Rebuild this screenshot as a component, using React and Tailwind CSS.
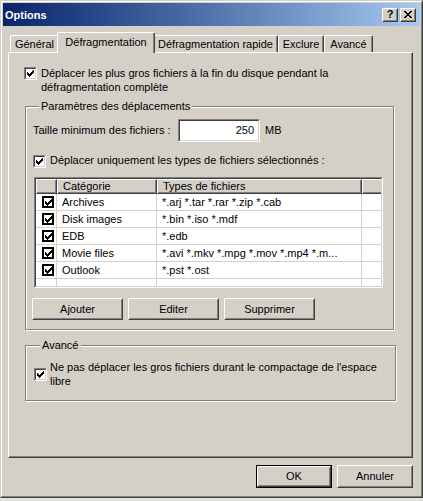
import React from "react";

function CheckMark() {
  return (
    <svg width="7" height="7" viewBox="0 0 7 7" shapeRendering="crispEdges" className="block">
      <path
        fill="#000"
        d="M6 0h1v1h-1z M5 1h2v1h-2z M0 2h1v1h-1z M4 2h3v1h-3z M0 3h2v1h-2z M3 3h3v1h-3z M0 4h5v1h-5z M1 5h3v1h-3z M2 6h1v1h-1z"
      />
    </svg>
  );
}

function Check({ className = "" }) {
  return (
    <div className={"w-[13px] h-[13px] shrink-0 border border-t-[#808080] border-l-[#808080] border-r-white border-b-white " + className}>
      <div className="w-full h-full bg-white border border-t-[#404040] border-l-[#404040] border-r-[#D4D0C8] border-b-[#D4D0C8] flex items-center justify-center">
        <CheckMark />
      </div>
    </div>
  );
}

function FlatCheck() {
  return (
    <div className="w-[12px] h-[12px] shrink-0 border-2 border-black bg-white flex items-center justify-center">
      <CheckMark />
    </div>
  );
}

function Button({ children, className = "" }) {
  return (
    <div className={"border border-t-white border-l-white border-r-[#404040] border-b-[#404040] bg-[#D4D0C8] " + className}>
      <div className="w-full h-full border border-t-[#D4D0C8] border-l-[#D4D0C8] border-r-[#808080] border-b-[#808080] flex items-center justify-center">
        {children}
      </div>
    </div>
  );
}

function XGlyph() {
  return (
    <svg width="8" height="7" viewBox="0 0 8 7" shapeRendering="crispEdges" className="block">
      <path
        fill="#000"
        d="M0 0h2v1h-2z M6 0h2v1h-2z M1 1h2v1h-2z M5 1h2v1h-2z M2 2h4v1h-4z M3 3h2v1h-2z M2 4h4v1h-4z M1 5h2v1h-2z M5 5h2v1h-2z M0 6h2v1h-2z M6 6h2v1h-2z"
      />
    </svg>
  );
}

function TitleBar() {
  return (
    <div className="h-[23px] shrink-0 bg-gradient-to-r from-[#0A246A] to-[#A6CAF0] flex items-center justify-between pl-[2px] pr-[4px]">
      <span className="text-white font-bold text-[11px] leading-[14px]">Options</span>
      <div className="flex items-center gap-[2px]">
        <Button className="w-[16px] h-[14px]">
          <span className="font-bold text-[11px] leading-[10px] -mt-[1px]">?</span>
        </Button>
        <Button className="w-[16px] h-[14px]">
          <XGlyph />
        </Button>
      </div>
    </div>
  );
}

function Tab({ label, w }) {
  return (
    <div
      className={
        "h-[17px] shrink-0 bg-[#D4D0C8] border-t border-l border-r border-t-white border-l-white border-r-[#404040] rounded-tl-[2px] rounded-tr-[2px] shadow-[inset_-1px_0_0_#808080] flex items-center justify-center " +
        w
      }
    >
      {label}
    </div>
  );
}

function Tabs() {
  return (
    <div className="h-[20px] shrink-0 flex items-end pl-[2px]">
      <Tab label="Général" w="w-[49px]" />
      <div className="relative z-10 -mx-[2px] -mb-[1px] w-[98px] h-[21px] shrink-0 bg-[#D4D0C8] border-t border-l border-r border-t-white border-l-white border-r-[#404040] rounded-tl-[2px] rounded-tr-[2px] shadow-[inset_-1px_0_0_#808080] flex items-center justify-center pb-[2px]">
        Défragmentation
      </div>
      <Tab label="Défragmentation rapide" w="w-[125px]" />
      <Tab label="Exclure" w="w-[46px]" />
      <Tab label="Avancé" w="w-[49px]" />
    </div>
  );
}

function Group({ label, className = "", children }) {
  return (
    <div className={"border border-[#808080] shadow-[inset_1px_1px_0_#ffffff,1px_1px_0_#ffffff] flex flex-col " + className}>
      <div className="-mt-[8px] ml-[7px] px-[2px] w-fit bg-[#D4D0C8] leading-[14px]">{label}</div>
      {children}
    </div>
  );
}

const rows = [
  ["Archives", "*.arj *.tar *.rar *.zip *.cab"],
  ["Disk images", "*.bin *.iso *.mdf"],
  ["EDB", "*.edb"],
  ["Movie files", "*.avi *.mkv *.mpg *.mov *.mp4 *.m..."],
  ["Outlook", "*.pst *.ost"],
];

function HeaderCell({ children, w }) {
  return (
    <div className={"h-full shrink-0 border-t border-l border-t-white border-l-white border-r border-b border-r-[#404040] border-b-[#404040] shadow-[inset_-1px_-1px_0_#808080] flex items-center pl-[5px] " + w}>
      {children}
    </div>
  );
}

function List() {
  return (
    <div className="ml-[2px] mt-[9px] w-[349px] h-[111px] border border-t-[#808080] border-l-[#808080] border-r-white border-b-white">
      <div className="w-full h-full bg-white border border-t-[#404040] border-l-[#404040] border-r-[#D4D0C8] border-b-[#D4D0C8] overflow-hidden flex flex-col">
        <div className="h-[15px] shrink-0 flex bg-[#D4D0C8]">
          <HeaderCell w="w-[21px]" />
          <HeaderCell w="w-[100px]">Catégorie</HeaderCell>
          <HeaderCell w="w-[205px]">Types de fichiers</HeaderCell>
          <div className="h-full flex-1 border-t border-l border-t-white border-l-white border-b border-b-[#404040] shadow-[inset_0_-1px_0_#808080]" />
        </div>
        {rows.map(([cat, types]) => (
          <div key={cat} className="h-[17px] shrink-0 flex border-b border-[#D4D0C8]">
            <div className="w-[21px] shrink-0 border-r border-[#D4D0C8] flex items-center pl-[6px]">
              <FlatCheck />
            </div>
            <div className="w-[100px] shrink-0 border-r border-[#D4D0C8] flex items-center pl-[5px] whitespace-nowrap">{cat}</div>
            <div className="w-[205px] shrink-0 border-r border-[#D4D0C8] flex items-center pl-[5px] whitespace-nowrap overflow-hidden">{types}</div>
            <div className="flex-1" />
          </div>
        ))}
        <div className="h-[17px] shrink-0 flex">
          <div className="w-[21px] shrink-0 border-r border-[#D4D0C8]" />
          <div className="w-[100px] shrink-0 border-r border-[#D4D0C8]" />
          <div className="w-[205px] shrink-0 border-r border-[#D4D0C8]" />
        </div>
      </div>
    </div>
  );
}

function Panel() {
  return (
    <div className="w-[405px] h-[406px] shrink-0 bg-[#D4D0C8] border border-t-white border-l-white border-r-[#404040] border-b-[#404040] shadow-[inset_-1px_-1px_0_#808080] flex flex-col pl-[15px]">
      <div className="mt-[13px] flex items-start gap-[4px] leading-[14px]">
        <Check className="mt-[1px]" />
        <div>
          Déplacer les plus gros fichiers à la fin du disque pendant la
          <br />
          défragmentation complète
        </div>
      </div>

      <Group label="Paramètres des déplacements" className="mt-[12px] ml-[1px] w-[369px] pl-[6px] pb-[9px]">
        <div className="mt-[6px] h-[23px] flex items-center">
          <div className="w-[146px] pl-[1px] shrink-0">Taille minimum des fichiers :</div>
          <div className="w-[82px] h-[23px] border border-t-[#808080] border-l-[#808080] border-r-white border-b-white">
            <div className="w-full h-full bg-white border border-t-[#404040] border-l-[#404040] border-r-[#D4D0C8] border-b-[#D4D0C8] flex items-center justify-end pr-[4px]">
              250
            </div>
          </div>
          <div className="ml-[5px]">MB</div>
        </div>
        <div className="mt-[11px] flex items-start gap-[4px] leading-[14px] ml-[1px]">
          <Check className="mt-[2px]" />
          <div>Déplacer uniquement les types de fichiers sélectionnés :</div>
        </div>
        <List />
        <div className="mt-[10px] flex gap-[5px]">
          <Button className="w-[91px] h-[22px]">Ajouter</Button>
          <Button className="w-[91px] h-[22px]">Editer</Button>
          <Button className="w-[91px] h-[22px]">Supprimer</Button>
        </div>
      </Group>

      <Group label="Avancé" className="mt-[15px] ml-[1px] w-[371px] pl-[7px] pb-[12px]">
        <div className="mt-[8px] flex items-center gap-[3px] leading-[14px] ml-[1px]">
          <Check />
          <div>
            Ne pas déplacer les gros fichiers durant le compactage de l'espace
            <br />
            libre
          </div>
        </div>
      </Group>
    </div>
  );
}

function BottomButtons() {
  return (
    <div className="w-[405px] mt-[7px] flex justify-end gap-[5px]">
      <div className="w-[76px] h-[23px] border border-black">
        <Button className="w-full h-full">OK</Button>
      </div>
      <Button className="w-[76px] h-[23px]">Annuler</Button>
    </div>
  );
}

export default function App() {
  return (
    <div className="w-[423px] h-[501px] bg-[#E4E2DC] font-['Liberation_Sans',Arial,sans-serif] text-[11px] text-black overflow-hidden">
      <div className="w-[423px] h-[498px] border border-t-[#D4D0C8] border-l-[#D4D0C8] border-r-[#404040] border-b-[#404040]">
        <div className="w-full h-full border border-t-white border-l-white border-r-[#808080] border-b-[#808080] bg-[#D4D0C8] p-[1px] flex flex-col">
          <TitleBar />
          <div className="flex-1 pl-[5px] pt-[6px] flex flex-col">
            <Tabs />
            <Panel />
            <BottomButtons />
          </div>
        </div>
      </div>
    </div>
  );
}
